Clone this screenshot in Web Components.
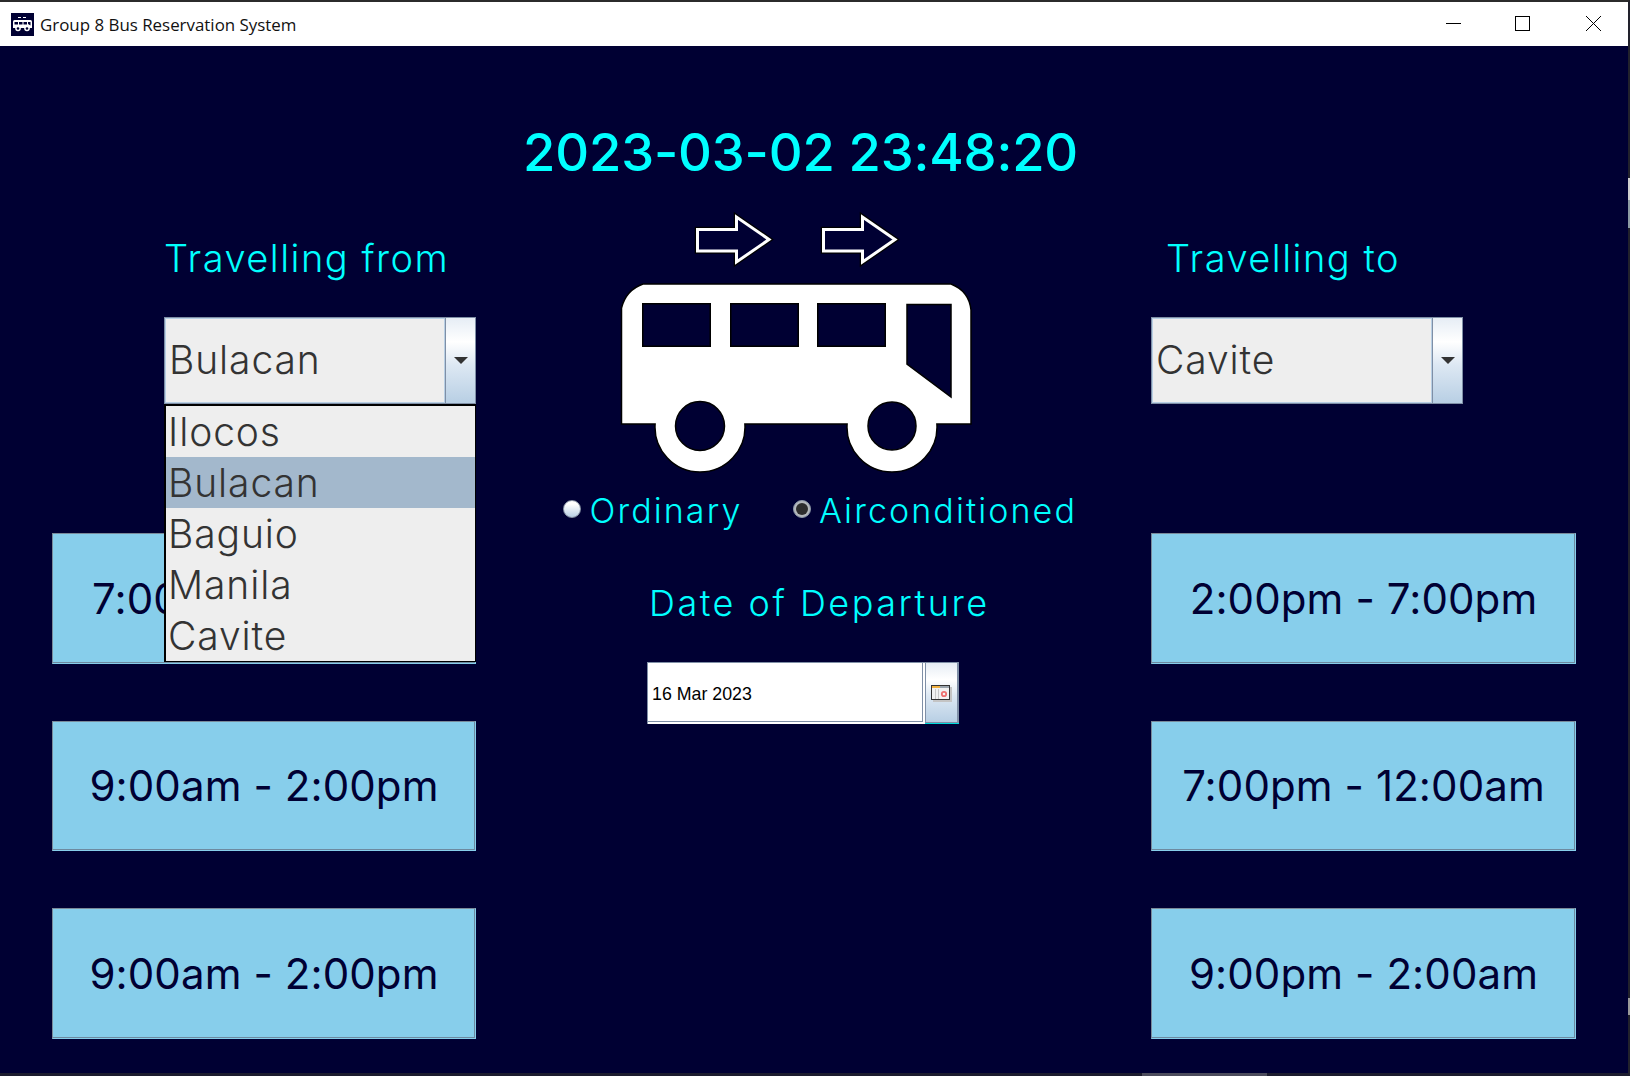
<!DOCTYPE html>
<html>
<head>
<meta charset="utf-8">
<title>Group 8 Bus Reservation System</title>
<style>
    html, body { margin: 0; padding: 0; background: #000033; }
    body { font-family: "Inter", "Liberation Sans", sans-serif; }
    .clock-cell { grid-column: 2; grid-row: 1; }
    route-column { grid-row: 2; }
    center-panel { grid-column: 2; grid-row: 2; }
</style>
</head>
<body>
<app-window>
    <title-bar slot="bar">Group 8 Bus Reservation System</title-bar>
    <clock-label class="clock-cell">2023-03-02 23:48:20</clock-label>

    <route-column style="grid-column: 1" label="Travelling from" label-x="112" combo-x="112">
        <combo-box slot="combo" value="Bulacan" open>
            <combo-option>Ilocos</combo-option>
            <combo-option selected>Bulacan</combo-option>
            <combo-option>Baguio</combo-option>
            <combo-option>Manila</combo-option>
            <combo-option>Cavite</combo-option>
        </combo-box>
        <time-button>7:00am - 9:00am</time-button>
        <time-button>9:00am - 2:00pm</time-button>
        <time-button>9:00am - 2:00pm</time-button>
    </route-column>

    <center-panel></center-panel>

    <route-column style="grid-column: 3" label="Travelling to" label-x="15" combo-x="0">
        <combo-box slot="combo" value="Cavite"></combo-box>
        <time-button>2:00pm - 7:00pm</time-button>
        <time-button>7:00pm - 12:00am</time-button>
        <time-button>9:00pm - 2:00am</time-button>
    </route-column>
</app-window>

<script>
class AppWindow extends HTMLElement {
    constructor() {
        super();
        this.attachShadow({ mode: 'open' });
        this.shadowRoot.innerHTML = `
            <style>
                :host {
                    display: flex;
                    flex-direction: column;
                    position: relative;
                    width: 1630px;
                    height: 1076px;
                    box-sizing: border-box;
                    border-top: 2px solid #2b2b2b;
                    border-right: 2px solid #22222c;
                    border-bottom: 3px solid #1c1c2e;
                    background: #000033;
                    overflow: visible;
                }
                main {
                    flex: 1;
                    display: grid;
                    grid-template-columns: 424px 675px 425px;
                    grid-template-rows: 64px 1fr;
                    padding: 75px 0 0 52px;
                }
                /* bits of the desktop showing past the window edge */
                .peek { position: absolute; }
                .p1 { right: -2px; top: 176px; width: 2px; height: 22px; background: #cfcfcf; }
                .p2 { right: -2px; top: 198px; width: 2px; height: 28px; background: #8c9ba3; }
                .p3 { right: -2px; top: 996px; width: 2px; height: 17px; background: #9a9a9a; }
                .p4 { bottom: -3px; left: 1142px; width: 125px; height: 3px; background: #4c4c5c; }
            </style>
            <slot name="bar"></slot>
            <main><slot></slot></main>
            <i class="peek p1"></i><i class="peek p2"></i><i class="peek p3"></i><i class="peek p4"></i>
        `;
    }
}

class TitleBar extends HTMLElement {
    constructor() {
        super();
        this.attachShadow({ mode: 'open' });
        this.shadowRoot.innerHTML = `
            <style>
                :host {
                    display: flex;
                    align-items: center;
                    height: 44px;
                    background: #fff;
                    color: #111;
                    font: 16.9px "Open Sans", sans-serif;
                    flex: none;
                }
                .logo { margin: 0 6px 0 11px; width: 23px; height: 23px; flex: none; }
                .name { flex: 1; }
                .ctl { flex: none; display: block; }
            </style>
            <svg class="logo" viewBox="0 0 23 23">
                <rect width="23" height="23" fill="#000033"/>
                <path d="M2 8.500 Q2 7 3.500 7 H19.500 Q21 7 21 8.500 V15 H2Z" fill="#fff"/>
                <path d="M3.500 9h3.500v2.500h-3.500zM8 9h3.500v2.500h-3.500zM12.500 9h3.500v2.500h-3.500zM17 9h2.500v3.500l-2.500-1.500z" fill="#000033"/>
                <circle cx="7" cy="15.500" r="2.800" fill="#fff"/><circle cx="16" cy="15.500" r="2.800" fill="#fff"/>
                <circle cx="7" cy="15.500" r="1.300" fill="#000033"/><circle cx="16" cy="15.500" r="1.300" fill="#000033"/>
                <path d="M7 4.500h3M12 4.500h3" stroke="#fff" stroke-width="1"/>
            </svg>
            <span class="name"><slot></slot></span>
            <svg class="ctl" width="182" height="44" viewBox="0 0 182 44" fill="none" stroke="#000">
                <path d="M0 21.500h15"/>
                <rect x="69.500" y="14.500" width="14" height="14"/>
                <path d="M140 14l15 15M155 14l-15 15"/>
            </svg>
        `;
    }
}

class ClockLabel extends HTMLElement {
    constructor() {
        super();
        this.attachShadow({ mode: 'open' });
        this.shadowRoot.innerHTML = `
            <style>
                :host {
                    display: block;
                    margin: -1px 0 0 47px;
                    color: #00ffff;
                    font-size: 52.500px;
                    font-weight: 500;
                    line-height: 64px;
                    white-space: nowrap;
                    letter-spacing: -0.15px;
                }
            </style>
            <slot></slot>
        `;
    }
}

class RouteColumn extends HTMLElement {
    constructor() {
        super();
        this.attachShadow({ mode: 'open' });
        this.shadowRoot.innerHTML = `
            <style>
                :host { display: block; }
                .label {
                    margin-top: 50px;
                    height: 46px;
                    line-height: 46px;
                    color: #00ffff;
                    font-size: 38px;
                    font-weight: 300;
                    white-space: nowrap;
                    letter-spacing: 1.5px;
                }
                .combo { margin-top: 36px; }
                .times {
                    display: flex;
                    flex-direction: column;
                    gap: 57px;
                    margin-top: 129px;
                }
            </style>
            <div class="label"></div>
            <div class="combo"><slot name="combo"></slot></div>
            <div class="times"><slot></slot></div>
        `;
    }

    connectedCallback() {
        const label = this.shadowRoot.querySelector('.label');
        label.textContent = this.getAttribute('label');
        label.style.marginLeft = this.getAttribute('label-x') + 'px';
        this.shadowRoot.querySelector('.combo').style.marginLeft = this.getAttribute('combo-x') + 'px';
    }
}

class ComboBox extends HTMLElement {
    constructor() {
        super();
        this.attachShadow({ mode: 'open' });
        this.shadowRoot.innerHTML = `
            <style>
                :host {
                    display: flex;
                    position: relative;
                    width: 312px;
                    height: 87px;
                    color: #333;
                    font-size: 39px;
                    font-weight: 300;
                }
                .value {
                    flex: 1;
                    display: flex;
                    align-items: center;
                    box-sizing: border-box;
                    padding: 0 0 2px 4px;
                    background: #eee;
                    border: 1px solid #7f8fa6;
                    outline: 1px solid #b8cfe4;
                    outline-offset: -2px;
                    letter-spacing: 0.9px;
                }
                .btn {
                    flex: none;
                    width: 30px;
                    box-sizing: border-box;
                    display: flex;
                    align-items: center;
                    justify-content: center;
                    border: 1px solid #7f8fa6;
                    border-left: none;
                    background: linear-gradient(#e6edf5 0%, #fff 28%, #dde8f3 55%, #b8cfe4 100%);
                }
                .arrow {
                    width: 0; height: 0;
                    border-left: 7.500px solid transparent;
                    border-right: 7.500px solid transparent;
                    border-top: 7px solid #333;
                }
                .list {
                    display: none;
                    position: absolute;
                    z-index: 5;
                    left: 0;
                    top: 87px;
                    width: 312px;
                    box-sizing: border-box;
                    border: 2px solid #000;
                    border-width: 2px 1px 1px 2px;
                    background: #eee;
                }
                :host([open]) .list { display: block; }
            </style>
            <div class="value"></div>
            <div class="btn"><div class="arrow"></div></div>
            <div class="list"><slot></slot></div>
        `;
    }

    connectedCallback() {
        this.shadowRoot.querySelector('.value').textContent = this.getAttribute('value');
    }
}

class ComboOption extends HTMLElement {
    constructor() {
        super();
        this.attachShadow({ mode: 'open' });
        this.shadowRoot.innerHTML = `
            <style>
                :host {
                    display: flex;
                    align-items: center;
                    height: 51px;
                    padding-left: 2px;
                    color: #333;
                    letter-spacing: 0.9px;
                }
                :host([selected]) { background: #a3b8cc; }
            </style>
            <slot></slot>
        `;
    }
}

class TimeButton extends HTMLElement {
    constructor() {
        super();
        this.attachShadow({ mode: 'open' });
        this.shadowRoot.innerHTML = `
            <style>
                :host {
                    display: flex;
                    align-items: center;
                    justify-content: center;
                    box-sizing: border-box;
                    height: 130.500px;
                    background: #87ceeb;
                    border-top: 1px solid #7a8a99;
                    border-left: 1px solid #7a8a99;
                    box-shadow: inset -1px -1px 0 #6d8aa0;
                    border-right: 1px solid #87ceeb;
                    border-bottom: 1px solid #87ceeb;
                    color: #000033;
                    font-size: 42px;
                    font-weight: 400;
                    letter-spacing: 0.1px;
                    white-space: nowrap;
                }
            </style>
            <slot></slot>
        `;
    }
}

class RadioOption extends HTMLElement {
    constructor() {
        super();
        this.attachShadow({ mode: 'open' });
        this.shadowRoot.innerHTML = `
            <style>
                :host {
                    display: flex;
                    align-items: center;
                    gap: 8.500px;
                    color: #00ffff;
                    font-size: 34px;
                    font-weight: 300;
                    line-height: 44px;
                    white-space: nowrap;
                    letter-spacing: 2.1px;
                }
                .dot {
                    width: 18px;
                    height: 18px;
                    box-sizing: border-box;
                    border-radius: 50%;
                    border: 1px solid #8a96a6;
                    background: linear-gradient(#fff 20%, #b8cfe4 100%);
                    display: flex;
                    align-items: center;
                    justify-content: center;
                    margin-top: -5px;
                }
                .dot i { display: none; width: 12px; height: 12px; border-radius: 50%; background: #2e2e2e; flex: none; }
                :host([checked]) .dot { background: #b4b8bc; }
                :host([checked]) .dot i { display: block; }
            </style>
            <span class="dot"><i></i></span>
            <slot></slot>
        `;
    }
}

class DateField extends HTMLElement {
    constructor() {
        super();
        this.attachShadow({ mode: 'open' });
        this.shadowRoot.innerHTML = `
            <style>
                :host { display: flex; width: 312px; height: 62px; }
                .input {
                    width: 278px;
                    box-sizing: border-box;
                    display: flex;
                    align-items: center;
                    padding: 3px 0 0 5px;
                    background: #fff;
                    color: #000;
                    font: 17.800px "Liberation Sans", sans-serif;
                    box-shadow: inset 1px 1px 0 #7f8fa6, inset -2px -2px 0 #fff, inset -3px -3px 0 #7f8fa6;
                }
                .btn {
                    width: 34px;
                    height: 61px;
                    box-sizing: border-box;
                    display: flex;
                    align-items: center;
                    justify-content: center;
                    padding-top: 2px;
                    border: 1px solid #7f8fa6;
                    border-right-width: 2px;
                    background: linear-gradient(#e6edf5 0%, #fff 28%, #dde8f3 55%, #b8cfe4 100%);
                    box-shadow: 0 1px 0 #00dcdc;
                }
            </style>
            <div class="input"><slot></slot></div>
            <div class="btn">
                <svg width="21" height="17" viewBox="0 0 21 17">
                    <rect x="2" y="2" width="19" height="15" fill="#c4c4c4"/>
                    <rect x="0.500" y="0.500" width="18" height="14" fill="#f2f2f2" stroke="#333"/>
                    <rect x="1" y="1" width="8" height="2" fill="#f0b040"/>
                    <rect x="9" y="1" width="9" height="2" fill="#9aa4ad"/>
                    <path d="M4.500 4v10M7.500 4v10" stroke="#c8c8c8"/>
                    <circle cx="13" cy="9" r="2.200" fill="none" stroke="#ee7070" stroke-width="1.800"/>
                </svg>
            </div>
        `;
    }
}

class CenterPanel extends HTMLElement {
    constructor() {
        super();
        this.attachShadow({ mode: 'open' });
        this.shadowRoot.innerHTML = `
            <style>
                :host { display: block; }
                .bus { display: block; margin: 20px 0 0 142px; }
                .radios { display: flex; gap: 50px; margin: 14px 0 0 87px; }
                .date-label {
                    margin: 47px 0 0 173px;
                    color: #00ffff;
                    font-size: 36px;
                    font-weight: 300;
                    line-height: 46px;
                    white-space: nowrap;
                    letter-spacing: 2.5px;
                }
                date-field { margin: 36px 0 0 171px; }
            </style>
            <svg class="bus" width="360" height="270" viewBox="618 205 360 270">
                <defs>
                    <path id="arrow" d="M0 0 H39 V-12.500 L71.500 10 L39 32.500 V21.500 H0Z"/>
                </defs>
                <path fill="#fff" stroke="#000" stroke-width="1.500" d="M643 284 H951 Q969 291 971 310 V424 H936.900 A45 45 0 1 1 847.100 424 H744.900 A45 45 0 1 1 655.100 424 H621.500 V308 Q626 290 643 284Z"/>
                <g fill="#000033" stroke="#000" stroke-width="1.500">
                    <rect x="642.750" y="303.750" width="67.500" height="42.500"/>
                    <rect x="730.750" y="303.750" width="67.500" height="42.500"/>
                    <rect x="817.750" y="303.750" width="67.500" height="42.500"/>
                    <path d="M907 304.500 H951 V397 L907 364Z"/>
                    <circle cx="700" cy="426" r="24.500"/>
                    <circle cx="892" cy="426" r="24"/>
                </g>
                <g fill="#000033" stroke="#000" stroke-width="5.500">
                    <use href="#arrow" x="697.500" y="229.500"/>
                    <use href="#arrow" x="823.500" y="229.500"/>
                </g>
                <g fill="#000033" stroke="#fff" stroke-width="3">
                    <use href="#arrow" x="697.500" y="229.500"/>
                    <use href="#arrow" x="823.500" y="229.500"/>
                </g>
            </svg>
            <div class="radios">
                <radio-option>Ordinary</radio-option>
                <radio-option checked>Airconditioned</radio-option>
            </div>
            <div class="date-label">Date of Departure</div>
            <date-field>16 Mar 2023</date-field>
        `;
    }
}

customElements.define('app-window', AppWindow);
customElements.define('title-bar', TitleBar);
customElements.define('clock-label', ClockLabel);
customElements.define('route-column', RouteColumn);
customElements.define('combo-box', ComboBox);
customElements.define('combo-option', ComboOption);
customElements.define('time-button', TimeButton);
customElements.define('radio-option', RadioOption);
customElements.define('date-field', DateField);
customElements.define('center-panel', CenterPanel);
</script>
</body>
</html>
